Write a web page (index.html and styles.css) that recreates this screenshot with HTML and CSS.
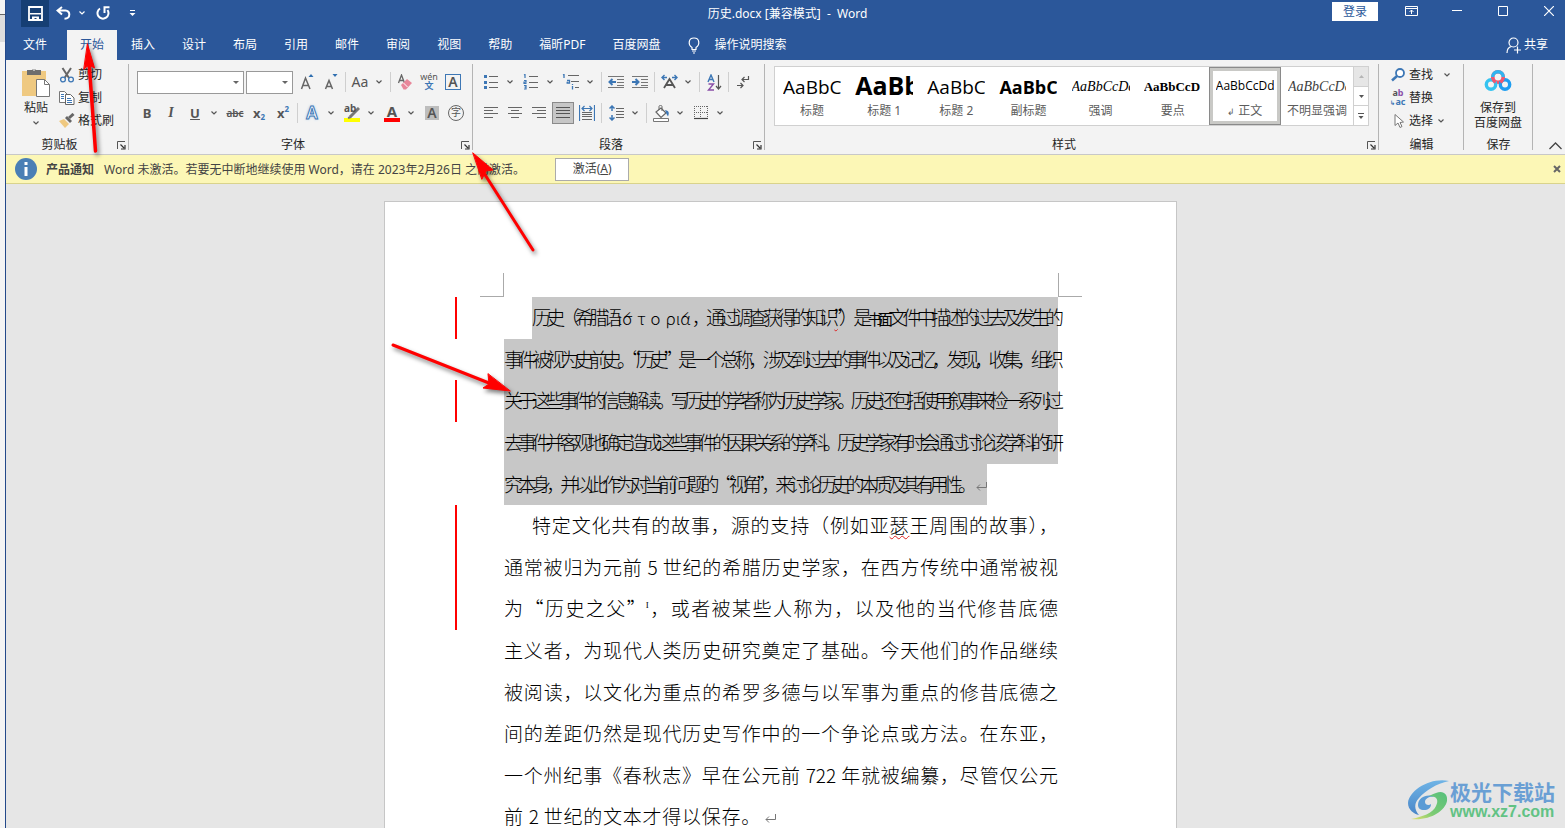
FILE: index.html
```html
<!DOCTYPE html>
<html lang="zh-CN">
<head>
<meta charset="utf-8">
<title>历史.docx - Word</title>
<link rel="stylesheet" href="styles.css">
</head>
<body>
<svg class="sprite" aria-hidden="true">
  <symbol id="chev" viewBox="0 0 6 4"><path d="M.5 .5 3 3 5.500 .5" fill="none" stroke="currentColor" stroke-width="1.2"/></symbol>
  <symbol id="launch" viewBox="0 0 9 9"><path d="M.5 8V.5H8" fill="none" stroke="#555"/><path d="M3.500 3.500 7 7M8 4v4H4" fill="none" stroke="#333" stroke-width="1.200"/></symbol>
</svg>
<div class="app">
  <div class="edge"></div>
  <main class="window">
    <header class="titlebar">
      <div class="quick">
        <button class="save" aria-label="保存"><svg width="15" height="15" viewBox="0 0 15 15"><path d="M1 1h13v13H1z" fill="none" stroke="#fff" stroke-width="1.800"/><path d="M2 7h11v1.500H2zM4 10.500h7V14H8.500v-2H6.500v2H4z" fill="#fff"/></svg></button>
        <button class="undo" aria-label="撤消"><svg width="16" height="14" viewBox="0 0 16 14"><path d="M6 1 1.500 4.500 6 8.500M2 4.500h7.500c5 0 5.500 8-1 8.300" fill="none" stroke="#fff" stroke-width="2"/></svg></button>
        <button class="tiny" aria-label="撤消列表"><svg class="chev"><use href="#chev"/></svg></button>
        <button class="redo" aria-label="重复"><svg width="15" height="14" viewBox="0 0 15 14"><path d="M4 2.500A5.500 5.500 0 1 0 11.500 4" fill="none" stroke="#fff" stroke-width="2"/><path d="M8.500 7V1.200H13.500" fill="none" stroke="#fff" stroke-width="2"/></svg></button>
        <button class="custom" aria-label="自定义快速访问工具栏"><svg width="7" height="7" viewBox="0 0 7 7"><path d="M1 .5h5" stroke="#fff"/><path d="M.5 3h6l-3 3z" fill="#fff"/></svg></button>
      </div>
      <h1 class="title">历史.docx [兼容模式]&nbsp; -&nbsp; Word</h1>
      <div class="syscmds">
        <button class="login">登录</button>
        <button class="sys" aria-label="功能区显示选项"><svg width="13" height="10" viewBox="0 0 13 10"><path d="M.5.5h12v9H.5zM.5 2.500h12M6.500 8V4M4.500 6l2-2 2 2" fill="none" stroke="#fff"/></svg></button>
        <button class="sys" aria-label="最小化"><svg width="10" height="10" viewBox="0 0 10 10"><path d="M0 4.500h10" stroke="#fff"/></svg></button>
        <button class="sys" aria-label="最大化"><svg width="10" height="10" viewBox="0 0 10 10"><path d="M.5.5h9v9h-9z" fill="none" stroke="#fff"/></svg></button>
        <button class="sys last" aria-label="关闭"><svg width="10" height="10" viewBox="0 0 10 10"><path d="m0 0 10 10M10 0 0 10" stroke="#fff" stroke-width="1.200"/></svg></button>
      </div>
    </header>
    <nav class="tabs">
      <button class="tab file">文件</button>
      <button class="tab active">开始</button>
      <button class="tab">插入</button>
      <button class="tab">设计</button>
      <button class="tab">布局</button>
      <button class="tab">引用</button>
      <button class="tab">邮件</button>
      <button class="tab">审阅</button>
      <button class="tab">视图</button>
      <button class="tab">帮助</button>
      <button class="tab">福昕PDF</button>
      <button class="tab">百度网盘</button>
      <button class="tell"><svg width="12" height="17" viewBox="0 0 12 17"><path d="M4 12.500v-2C0 8 0 1 6 1s6 7 2 9.500v2zM4 14h4M5 16h2" fill="none" stroke="#fff" stroke-width="1.200"/></svg>操作说明搜索</button>
      <button class="share"><svg width="16" height="17" viewBox="0 0 16 17"><circle cx="7.500" cy="5.500" r="4.500" fill="none" stroke="#fff" stroke-width="1.200"/><path d="M1 16c0-4 2-6 4.500-6.500M8 13h7M11.500 9.500v7" fill="none" stroke="#fff" stroke-width="1.200"/></svg>共享</button>
    </nav>

    <section class="ribbon">
      <div class="group clipboard">
        <div class="body clip">
          <button class="paste"><svg width="30" height="32" viewBox="0 0 30 32"><path d="M1 4h24v25H1z" fill="#efc981"/><path d="M6 8V3h5a2.500 2.500 0 0 1 4 0h5v5z" fill="#6d6d6d"/><path d="M12 3h2" stroke="#fff"/><path d="M15.500 12.500h8l5 5v12h-13z" fill="#fff" stroke="#777"/><path d="M23.500 12.500v5h5" fill="none" stroke="#777"/></svg><span>粘贴</span><svg class="chev"><use href="#chev"/></svg></button>
          <div class="stack">
            <button class="cmd"><svg width="16" height="16" viewBox="0 0 16 16"><path d="m3.500 1 6.500 10M12 1 5.500 11" stroke="#666" stroke-width="2"/><circle cx="4" cy="12.500" r="2.400" fill="none" stroke="#3d77b5" stroke-width="1.300"/><circle cx="12" cy="12.500" r="2.400" fill="none" stroke="#3d77b5" stroke-width="1.300"/></svg>剪切</button>
            <button class="cmd"><svg width="16" height="16" viewBox="0 0 16 16"><path d="M7 12.500H.5v-11h5l3 3V5" fill="#fff" stroke="#777"/><path d="M6.500 4.500h5l3.500 3.500v6.500H6.500z" fill="#fff" stroke="#666"/><path d="M2 4.500h3M2 6.500h3M2 8.500h3M8 8.500h4M8 10.500h5M8 12.500h5" stroke="#3d77b5"/></svg>复制</button>
            <button class="cmd"><svg width="16" height="16" viewBox="0 0 16 16"><path d="m0 8 5-2 5 5-4 4z" fill="#efc981"/><path d="m6 5 2-2 5 5-2 2z" fill="#666"/><path d="m10 5 4.500-4" stroke="#666" stroke-width="3"/></svg>格式刷</button>
          </div>
        </div>
        <div class="foot"><span>剪贴板</span><button class="launcher" aria-label="剪贴板设置"><svg width="9" height="9"><use href="#launch"/></svg></button></div>
      </div>

      <div class="group font">
        <div class="body rows">
          <div class="row combos">
            <span class="combo name"><select aria-label="字体"><option></option></select></span>
            <span class="combo size"><select aria-label="字号"><option></option></select></span>
            <button class="ic" aria-label="增大字号"><svg width="16" height="18" viewBox="0 0 16 18"><path d="m2.500 16 4-11 4.500 11M4 12.500h5.500" fill="none" stroke="#666" stroke-width="1.500"/><path d="m9.500 4 2.500-3 2.500 3z" fill="#2f6fb0"/></svg></button>
            <button class="ic" aria-label="减小字号"><svg width="16" height="18" viewBox="0 0 16 18"><path d="m2.500 16 3.500-8.500L9.500 16M4 13.500h4.500" fill="none" stroke="#666" stroke-width="1.500"/><path d="m9.500 1 2.500 3 2.500-3z" fill="#2f6fb0"/></svg></button>
            <i class="sep"></i>
            <button class="split aa" aria-label="更改大小写"><span>Aa</span><svg class="chev"><use href="#chev"/></svg></button>
            <i class="sep"></i>
            <button class="ic" aria-label="清除格式"><svg width="16" height="17" viewBox="0 0 16 17"><path d="m1.500 9 3-8 3 8M2.500 6.500h4" fill="none" stroke="#666" stroke-width="1.300"/><path d="m4 11 6-6 5 4-6 6.500H6.500z" fill="#e8879a"/><path d="m6.500 9 4 4" stroke="#fff"/></svg></button>
            <button class="ic pinyin" aria-label="拼音指南"><span>wén</span><b>文</b></button>
            <button class="ic" aria-label="字符边框"><span class="boxed">A</span></button>
          </div>
          <div class="row">
            <button class="ic bold">B</button>
            <button class="ic ital">I</button>
            <button class="split" aria-label="下划线"><span class="und">U</span><svg class="chev"><use href="#chev"/></svg></button>
            <button class="ic strike">abc</button>
            <button class="ic script">x<sub>2</sub></button>
            <button class="ic script">x<sup>2</sup></button>
            <i class="sep"></i>
            <button class="split" aria-label="文本效果"><span class="glow">A</span><svg class="chev"><use href="#chev"/></svg></button>
            <button class="split" aria-label="突出显示"><span class="mark"><em>ab</em><svg width="16" height="12" viewBox="0 0 16 12"><path d="m6 10 9-9" stroke="#777" stroke-width="3"/><path d="m4 11 3-1" stroke="#777" stroke-width="2"/></svg></span><svg class="chev"><use href="#chev"/></svg></button>
            <button class="split" aria-label="字体颜色"><span class="color">A</span><svg class="chev"><use href="#chev"/></svg></button>
            <button class="ic" aria-label="字符底纹"><span class="shade">A</span></button>
            <button class="ic" aria-label="带圈字符"><span class="ring">字</span></button>
          </div>
        </div>
        <div class="foot"><span>字体</span><button class="launcher" aria-label="字体设置"><svg width="9" height="9"><use href="#launch"/></svg></button></div>
      </div>

      <div class="group para">
        <div class="body rows">
          <div class="row">
            <button class="split" aria-label="项目符号"><svg width="16" height="16" viewBox="0 0 16 16"><path d="M6 2.500h9M6 8.500h9M6 13.500h9" stroke="#666"/><path d="M1 1h3v3H1zM1 7h3v3H1zM1 12h3v3H1z" fill="#3d77b5"/></svg><svg class="chev"><use href="#chev"/></svg></button>
            <button class="split" aria-label="编号"><svg width="16" height="16" viewBox="0 0 16 16"><path d="M6 2.500h9M6 8.500h9M6 13.500h9" stroke="#666"/><path d="m1 1 1-.5V4M1 6.500h2v1.700H1v1.300h2.500M1 11.500h2v3.500H1M1.500 13.200H3" fill="none" stroke="#3d77b5" stroke-width="1.200"/></svg><svg class="chev"><use href="#chev"/></svg></button>
            <button class="split" aria-label="多级列表"><svg width="18" height="16" viewBox="0 0 18 16"><path d="M6 1.500h11M9 7.500h8M13 13.500h4" stroke="#666"/><path d="m1 1 1-.5V4M5 6.500h2.500V9H5.200V7.800M10.500 10v1M10.500 12v3.500" fill="none" stroke="#3d77b5" stroke-width="1.300"/></svg><svg class="chev"><use href="#chev"/></svg></button>
            <i class="sep"></i>
            <button class="ic" aria-label="减少缩进量"><svg width="16" height="14" viewBox="0 0 16 14"><path d="M0 1.500h16M9 4.500h7M9 7.500h7M9 10.500h7M0 12.500h16" stroke="#777"/><path d="M8 7H2M4.500 4 1.500 7l3 3" fill="none" stroke="#3d77b5" stroke-width="2"/></svg></button>
            <button class="ic" aria-label="增加缩进量"><svg width="16" height="14" viewBox="0 0 16 14"><path d="M0 1.500h16M9 4.500h7M9 7.500h7M9 10.500h7M0 12.500h16" stroke="#777"/><path d="M0 7h6M3.500 4l3 3-3 3" fill="none" stroke="#3d77b5" stroke-width="2"/></svg></button>
            <i class="sep"></i>
            <button class="split" aria-label="中文版式"><svg width="17" height="16" viewBox="0 0 17 16"><path d="m3 14 5.500-9L14 14M5 11h7" fill="none" stroke="#555" stroke-width="1.800"/><path d="M1 3.500h5M3.500 1 1 3.500 3.500 6M16 3.500h-5M13.500 1 16 3.500 13.500 6" fill="none" stroke="#3d77b5" stroke-width="1.400"/></svg><svg class="chev"><use href="#chev"/></svg></button>
            <i class="sep"></i>
            <button class="ic" aria-label="排序"><svg width="15" height="17" viewBox="0 0 15 17"><path d="m1 8 3-7 3 7M2 5.500h4" fill="none" stroke="#3d77b5" stroke-width="1.400"/><path d="M1.500 10h5l-5 6H7" fill="none" stroke="#8a4fa8" stroke-width="1.400"/><path d="M11.500 1v14M9 12l2.500 3 2.500-3" fill="none" stroke="#555" stroke-width="1.200"/></svg></button>
            <i class="sep"></i>
            <button class="ic" aria-label="显示编辑标记"><svg width="13" height="14" viewBox="0 0 13 14"><path d="M11.500 1v3.500H5M7.500 2 5 4.500 7.500 7M0 10.500h6M3.500 8 6 10.500 3.500 13" fill="none" stroke="#555" stroke-width="1.200"/></svg></button>
          </div>
          <div class="row">
            <button class="ic" aria-label="左对齐"><svg width="14" height="12" viewBox="0 0 14 12"><path d="M0 .5h14M0 3.500h9M0 6.500h14M0 10.500h9" stroke="#666"/></svg></button>
            <button class="ic" aria-label="居中"><svg width="14" height="12" viewBox="0 0 14 12"><path d="M0 .5h14M3 3.500h8M0 6.500h14M3 10.500h8" stroke="#666"/></svg></button>
            <button class="ic" aria-label="右对齐"><svg width="14" height="12" viewBox="0 0 14 12"><path d="M0 .5h14M5 3.500h9M0 6.500h14M5 10.500h9" stroke="#666"/></svg></button>
            <button class="ic pressed" aria-label="两端对齐"><svg width="14" height="12" viewBox="0 0 14 12"><path d="M0 .5h14M0 3.500h14M0 6.500h14M0 10.500h14" stroke="#555"/></svg></button>
            <button class="ic" aria-label="分散对齐"><svg width="16" height="16" viewBox="0 0 16 16"><path d="M.5 0v16M15.500 0v16M3 3.500h10M5.500 1 3 3.500 5.500 6M10.500 1 13 3.500 10.500 6" fill="none" stroke="#3d77b5" stroke-width="1.200"/><path d="M3 7.500h10M3 9.500h10M3 11.500h10M3 14.500h10" stroke="#666"/></svg></button>
            <i class="sep"></i>
            <button class="split" aria-label="行和段落间距"><svg width="15" height="16" viewBox="0 0 15 16"><path d="M7 3.500h8M7 6.500h8M7 9.500h8M7 12.500h8" stroke="#666"/><path d="M3 1v5M3 10v5M.5 3.500 3 1l2.500 2.500M.5 12.500 3 15l2.500-2.500" fill="none" stroke="#3d77b5" stroke-width="1.500"/></svg><svg class="chev"><use href="#chev"/></svg></button>
            <i class="sep"></i>
            <button class="split" aria-label="底纹"><svg width="17" height="17" viewBox="0 0 17 17"><path d="m3 7 5-4 5 5-5 4.500z" fill="#fff" stroke="#666" stroke-width="1.200"/><path d="M6 5V1.500C6 0 9 0 9 1.500V6" fill="none" stroke="#666"/><path d="M12 5c5 1 4 4 3 6.500-1-2-2-3-2-4z" fill="#3d77b5"/><path d="M.5 13.500h15v3H.5z" fill="#fff" stroke="#777"/></svg><svg class="chev"><use href="#chev"/></svg></button>
            <button class="split" aria-label="边框"><svg width="14" height="14" viewBox="0 0 14 14"><path d="M0 .5h14M0 6.500h14M.5 0v12M6.500 0v12M13.500 0v12" stroke="#666" stroke-dasharray="1 1"/><path d="M0 12.500h14" stroke="#444" stroke-width="1.200"/></svg><svg class="chev"><use href="#chev"/></svg></button>
          </div>
        </div>
        <div class="foot"><span>段落</span><button class="launcher" aria-label="段落设置"><svg width="9" height="9"><use href="#launch"/></svg></button></div>
      </div>

      <div class="group styles">
        <div class="body">
          <div class="gallery">
            <button class="tile"><span class="sample s-title">AaBbC</span><span>标题</span></button>
            <button class="tile"><span class="sample s-h1">AaBb</span><span>标题 1</span></button>
            <button class="tile"><span class="sample s-title">AaBbC</span><span>标题 2</span></button>
            <button class="tile"><span class="sample s-sub">AaBbCc</span><span>副标题</span></button>
            <button class="tile"><span class="sample s-em">AaBbCcDd</span><span>强调</span></button>
            <button class="tile"><span class="sample s-strong">AaBbCcD</span><span>要点</span></button>
            <button class="tile on"><span class="sample s-body">AaBbCcDd</span><span><small>↲</small> 正文</span></button>
            <button class="tile"><span class="sample s-em soft">AaBbCcDd</span><span>不明显强调</span></button>
            <div class="scroll">
              <button class="off" aria-label="上一行"><svg width="5" height="3" viewBox="0 0 5 3"><path d="M0 3h5L2.500 0z" fill="#b5b5b5"/></svg></button>
              <button aria-label="下一行"><svg width="5" height="3" viewBox="0 0 5 3"><path d="M0 0h5L2.500 3z" fill="#555"/></svg></button>
              <button aria-label="其他样式"><svg width="6" height="6" viewBox="0 0 6 6"><path d="M0 .5h6" stroke="#555"/><path d="M.5 3h5L3 6z" fill="#555"/></svg></button>
            </div>
          </div>
        </div>
        <div class="foot"><span>样式</span><button class="launcher" aria-label="样式设置"><svg width="9" height="9"><use href="#launch"/></svg></button></div>
      </div>

      <div class="group edit">
        <div class="body stack">
          <button class="cmd"><svg width="16" height="16" viewBox="0 0 16 16"><circle cx="10" cy="6" r="4" fill="#fff" stroke="#3d77b5" stroke-width="1.800"/><path d="m7 9-5 4.500" stroke="#3d77b5" stroke-width="2.500"/></svg>查找<svg class="chev far"><use href="#chev"/></svg></button>
          <button class="cmd"><span class="swap"><b>a<i>b</i></b><b><u>↳</u>ac</b></span>替换</button>
          <button class="cmd"><svg width="16" height="16" viewBox="0 0 16 16"><path d="M5 1.500v11l3-2.500 2 4.500 2-1-2-4 3.500-.5z" fill="#fff" stroke="#777"/></svg>选择<svg class="chev"><use href="#chev"/></svg></button>
        </div>
        <div class="foot"><span>编辑</span></div>
      </div>

      <div class="group cloud">
        <div class="body"><button class="pan"><svg width="28" height="24" viewBox="0 0 28 24"><circle cx="14" cy="8" r="5.300" fill="none" stroke="#f4566e" stroke-width="3.400"/><circle cx="7" cy="15.500" r="4.700" fill="none" stroke="#35c3f0" stroke-width="3.400"/><circle cx="21" cy="15.500" r="4.700" fill="none" stroke="#1e9df0" stroke-width="3.400"/><path d="M8.700 8a5.300 5.300 0 0 1 10.600 0" fill="none" stroke="#2fb4f0" stroke-width="3.400"/><path d="M8.700 8c0 2 1.500 4.500 3 5M19.300 8c0 2-1.500 4.500-3 5" fill="none" stroke="#f4566e" stroke-width="3.200"/></svg><span>保存到<br>百度网盘</span></button></div>
        <div class="foot"><span>保存</span></div>
      </div>
      <button class="collapse" aria-label="折叠功能区"><svg width="13" height="8" viewBox="0 0 13 8"><path d="m.5 7 6-6 6 6" fill="none" stroke="#444" stroke-width="1.300"/></svg></button>
    </section>

    <div class="notice">
      <svg width="22" height="22" viewBox="0 0 22 22"><circle cx="11" cy="11" r="11" fill="#4a7fb5"/><path d="M9.500 9h3v9h-3zM9.500 4h3v3h-3z" fill="#fff"/></svg>
      <strong>产品通知</strong>
      <span>Word 未激活。若要无中断地继续使用 Word，请在 2023年2月26日 之前激活。</span>
      <button class="activate">激活(<u>A</u>)</button>
      <button class="dismiss" aria-label="关闭通知"><svg width="8" height="8" viewBox="0 0 8 8"><path d="m1 1 6 6M7 1 1 7" stroke="#666" stroke-width="2"/></svg></button>
    </div>

    <section class="canvas">
      <article class="page">
        <div class="corners"><i></i><i></i></div>
        <p class="text selected">
          <span class="line first changed">历史（希腊语<span class="greek">ίσ τ ο ρία</span>，通过调查获得的知识<span class="typo">”</span>）是<span class="dense">书面</span>文件中描述的过去及发生的</span>
          <span class="line">事件被视为史前史。“历史”是一个总称，涉及到过去的事件以及记忆，发现，收集，组织</span>
          <span class="line changed">关于这些事件的信息解读。写历史的学者称为历史学家。历史还包括使用叙事来检一系列过</span>
          <span class="line">去事件并客观地确定造成这些事件的因果关系的学科。历史学家有时会通过讨论该学科的研</span>
          <span class="line end">究本身，并以此作为对当前问题的“视角”，来讨论历史的本质及其有用性。<svg class="ret" width="11" height="10" viewBox="0 0 11 10"><path d="M10.500 0v5.500H1M4 2.500 1 5.500l3 3" fill="none" stroke="#777"/></svg></span>
        </p>
        <p class="text">
          <span class="line first changed">特定文化共有的故事，源的支持（例如亚<span class="typo">瑟</span>王周围的故事），</span>
          <span class="line changed">通常被归为元前 5 世纪的希腊历史学家，在西方传统中通常被视</span>
          <span class="line changed">为“历史之父”<sup>I</sup>，或者被某些人称为，以及他的当代修昔底德</span>
          <span class="line">主义者，为现代人类历史研究奠定了基础。今天他们的作品继续</span>
          <span class="line">被阅读，以文化为重点的希罗多德与以军事为重点的修昔底德之</span>
          <span class="line">间的差距仍然是现代历史写作中的一个争论点或方法。在东亚，</span>
          <span class="line">一个州纪事《春秋志》早在公元前 722 年就被编纂，尽管仅公元</span>
          <span class="line short">前 2 世纪的文本才得以保存。<svg class="ret" width="11" height="10" viewBox="0 0 11 10"><path d="M10.500 0v5.500H1M4 2.500 1 5.500l3 3" fill="none" stroke="#777"/></svg></span>
        </p>
      </article>
      <div class="watermark">
        <svg width="44" height="44" viewBox="0 0 44 44"><defs><linearGradient id="sw" x1="0" y1="0" x2="0" y2="1"><stop offset="0" stop-color="#6fb4e6"/><stop offset="1" stop-color="#4a86c8"/></linearGradient><linearGradient id="sg" x1="1" y1="0" x2="0" y2="1"><stop offset="0" stop-color="#55bf7c"/><stop offset=".6" stop-color="#7ccb74"/><stop offset="1" stop-color="#e6e06a"/></linearGradient></defs><path d="M43 3C25-1 3 12 2 25c0 7 6 11 11 12-5-6-5-12 0-17C20 12 30 6 43 3z" fill="url(#sw)"/><path d="M12 27c0-8 10-12 17-8-5-1-10 1-10 5 0 3 4 4 6 2 0 4-3 6-7 6s-6-2-6-5z" fill="#5b9bd5"/><path d="M30 15c7-3 12 1 11 8-2 10-17 20-36 18 11-2 22-6 25-13 3-6 1-10-7-10 2-1 4-2 7-3z" fill="url(#sg)"/></svg>
        <div class="brand"><b>极光下载站</b><span>www.xz7.com</span></div>
      </div>
    </section>
  </main>
  <svg class="arrows" width="600" height="420" viewBox="0 0 600 420" aria-hidden="true">
    <g fill="#f00" stroke="#f00" stroke-linecap="round"><path d="M95.500 151 89 62" stroke-width="3.500"/><path d="m87.500 44 7 24-5.500-3-5 4z" stroke-width="1"/>
    <path d="M533 250 482 170" stroke-width="3"/><path d="m473 153 20 17-7 1-4 8z" stroke-width="1"/>
    <path d="M393 345 494 385" stroke-width="3"/><path d="m510 391-27 -3 6-4-1-10z" stroke-width="1"/></g>
  </svg>
</div>
</body>
</html>
```
FILE: styles.css
```css
* { box-sizing: border-box; }
body {
  margin: 0;
  font: 12px/16px "Noto Sans", "Noto Sans CJK SC", sans-serif;
  color: #262626;
}
button {
  border: 0;
  padding: 0;
  background: none;
  font: inherit;
  color: inherit;
  white-space: nowrap;
}
.sprite { position: absolute; width: 0; height: 0; }
.app { display: flex; height: 100vh; position: relative; overflow: hidden; }
.edge {
  flex: 0 0 6px;
  border-right: 1px solid #24498a;
  background: linear-gradient(#f4f4f4 14px, #666 14px 15px, #ddd 15px 42px, #f4f4f4 42px);
}
.window { flex: 1; min-width: 0; display: flex; flex-direction: column; }
.chev { width: 6px; height: 4px; flex: none; color: #555; }

/* title bar */
.titlebar {
  display: grid;
  grid-template-columns: 1fr auto 1fr;
  height: 30px;
  flex: none;
  background: #2b579a;
  color: #fff;
}
.titlebar .chev { color: #fff; }
.quick { display: flex; align-items: flex-start; padding-left: 15px; }
.quick button { display: flex; align-items: center; justify-content: center; height: 26px; }
.quick .save { width: 28px; height: 27px; background: #163f74; }
.undo { width: 30px; }
.tiny { width: 6px; }
.redo { width: 36px; }
.quick .custom { width: 22px; }
.title { margin: 0; padding-left: 4px; font-size: 12px; font-weight: 400; line-height: 28px; }
.syscmds { display: flex; justify-content: flex-end; align-items: flex-start; }
.login { width: 46px; height: 19px; margin: 2px 10px 0 0; background: #fff; color: #2b579a; }
.sys { width: 46px; height: 22px; display: flex; align-items: center; justify-content: center; }
.sys.last { width: 46px; margin-right: -7px; }

/* ribbon tabs */
.tabs { display: flex; gap: 1px; height: 30px; flex: none; background: #2b579a; color: #fff; }
.tab { padding: 0 13px; }
.tab.file { padding: 0 19px 0 17px; }
.tab.active { background: #f3f3f3; color: #2b579a; }
.tell { display: flex; align-items: center; gap: 14px; padding-left: 14px; }
.share { display: flex; align-items: center; gap: 2px; margin-left: auto; padding-right: 17px; }

/* ribbon */
.ribbon {
  display: flex;
  flex: none;
  height: 95px;
  background: #f3f3f3;
  border-bottom: 1px solid #c8c8c8;
}
.group { display: flex; flex-direction: column; position: relative; flex: none; }
.group::after {
  content: "";
  position: absolute;
  right: 0;
  top: 4px;
  bottom: 4px;
  width: 1px;
  background: #b4b4b4;
}
.clipboard { width: 123px; }
.font { width: 344px; }
.para { width: 292px; }
.styles { flex: 1 1 auto; min-width: 0; }
.edit { width: 85px; }
.cloud { width: 69px; }
.body { height: 74px; flex: none; }
.foot { display: flex; align-items: center; height: 20px; padding-top: 1px; text-align: center; }
.foot span { flex: 1; }
.launcher { width: 16px; height: 16px; display: flex; align-items: center; padding: 2px 0 0 4px; }
.clip { display: flex; padding-left: 15px; }
.paste { display: flex; flex-direction: column; align-items: center; width: 30px; padding-top: 7px; }
.paste span { line-height: 18px; }
.paste .chev { margin-top: 4px; }
.stack { display: flex; flex-direction: column; padding-top: 3px; }
.cmd { display: flex; align-items: center; gap: 3px; height: 23px; }
.clip .stack { padding-left: 8px; }
.rows { display: flex; flex-direction: column; padding: 9px 0 0 6px; gap: 5px; }
.row { display: flex; align-items: center; height: 26px; }
.ic { width: 24px; height: 24px; display: flex; align-items: center; justify-content: center; color: #555; }
.split { width: 40px; height: 24px; display: grid; grid-template-columns: 24px 14px; place-items: center; color: #555; }
.sep { width: 1px; height: 20px; margin: 0 2px; background: #cfcfcf; }
.combos { padding-left: 2px; }
.combo { position: relative; height: 23px; margin-right: 2px; }
.combo.name { width: 107px; }
.combo.size { width: 47px; }
.combo select { appearance: none; width: 100%; height: 100%; display: block; border: 1px solid #999; border-radius: 0; background: #fff; font: inherit; }
.combo::after {
  content: "";
  position: absolute;
  right: 5px;
  top: 10px;
  border: 3px solid transparent;
  border-top-color: #666;
  border-bottom: 0;
  pointer-events: none;
}
.aa { font-size: 14px; }
.pinyin { flex-direction: column; font-size: 9px; line-height: 8px; }
.pinyin b { color: #3d77b5; font-size: 9px; line-height: 10px; }
.boxed { width: 16px; height: 16px; border: 1px solid #3d77b5; font-weight: 600; font-size: 14px; line-height: 14px; }
.bold { font-weight: 700; font-size: 13px; }
.ital { font: italic 700 14px "Liberation Serif", serif; }
.und { font-weight: 700; font-size: 13px; text-decoration: underline; }
.strike { font-size: 10px; font-weight: 600; text-decoration: line-through; }
.script { font-weight: 700; font-size: 13px; }
.script sub, .script sup { font-size: 8px; line-height: 8px; color: #3d77b5; }
.script sub { padding-top: 8px; }
.script sup { padding-bottom: 8px; }
.glow { font-size: 17px; line-height: 18px; font-weight: 600; color: #fff; -webkit-text-stroke: 1px #3d77b5; text-shadow: 0 0 3px #7fb0e0; }
.mark { position: relative; width: 16px; height: 17px; border-bottom: 4px solid #ff0; }
.mark em { position: absolute; left: 0; top: -2px; font: 700 10px/10px "Noto Sans", sans-serif; }
.mark svg { display: block; margin-top: 2px; }
.color { width: 16px; height: 17px; border-bottom: 4px solid #f00; font-size: 15px; line-height: 12px; font-weight: 700; }
.shade { width: 14px; height: 14px; background: #bdbdbd; font-size: 14px; line-height: 14px; font-weight: 600; }
.ring { width: 16px; height: 16px; border: 1px solid #666; border-radius: 50%; font-size: 10px; line-height: 13px; }
.pressed { width: 22px; height: 22px; margin: 0 1px; background: #c6c6c6; border: 1px solid #8a8a8a; }

/* style gallery */
.styles .body { padding: 6px 10px 0 9px; }
.gallery { display: flex; height: 60px; border: 1px solid #d0d0d0; background: #fff; padding-left: 1px; }
.tile { flex: 1 1 72px; min-width: 0; display: flex; flex-direction: column; align-items: center; padding-top: 6px; color: #5c5c5c; overflow: hidden; }
.sample { width: 58px; height: 30px; overflow: hidden; text-align: left; line-height: 28px; color: #000; }
.s-title { font-family: "Open Sans", sans-serif; font-size: 19px; }
.s-h1 { font-family: "Open Sans", sans-serif; font-size: 25px; font-weight: 700; line-height: 24px; }
.s-sub { font-family: "Open Sans", sans-serif; font-size: 18px; font-weight: 700; }
.s-em { font: italic 14px/28px "Liberation Serif", serif; }
.s-strong { font: 700 13px/28px "Liberation Serif", serif; }
.s-body { font-family: "Open Sans", sans-serif; font-size: 12px; line-height: 26px; }
.soft { color: #404040; }
.tile small { font-size: 9px; }
.tile.on { border: 1px solid #8a8a8a; box-shadow: inset 0 0 0 3px #c9c9c6; padding-top: 5px; }
.scroll { flex: 0 0 15px; display: flex; flex-direction: column; border-left: 1px solid #d0d0d0; }
.scroll button { flex: 1; display: flex; align-items: center; justify-content: center; border-top: 1px solid #d0d0d0; }
.scroll .off { background: #e6e6e6; border-top: 0; }

.edit .stack { padding-left: 11px; }
.edit .cmd .chev { margin-left: 2px; }
.edit .cmd .far { margin-left: 8px; }
.swap { width: 16px; display: flex; flex-direction: column; font-size: 9px; line-height: 9px; color: #555; }
.swap i { font-style: normal; color: #8a4fa8; }
.swap b + b { color: #3d77b5; }
.swap u { font-size: 6px; text-decoration: none; }
.pan { width: 68px; display: flex; flex-direction: column; align-items: center; padding-top: 9px; line-height: 15px; }
.pan span { margin-top: 7px; }
.collapse { align-self: flex-end; width: 32px; height: 16px; text-align: right; padding-right: 3px; }

/* message bar */
.notice {
  display: flex;
  align-items: center;
  flex: none;
  height: 29px;
  padding: 0 4px 0 9px;
  background: #fcf7b6;
  border-bottom: 1px solid #d9d38c;
  color: #444;
}
.notice strong { margin: 0 10px 0 9px; }
.notice strong, .notice span { line-height: 20px; padding-top: 1px; }
.activate { width: 74px; height: 23px; margin-left: 30px; background: #fff; border: 1px solid #ababab; }
.dismiss { margin-left: auto; width: 8px; display: flex; }

/* document */
.canvas {
  position: relative;
  flex: 1;
  min-height: 0;
  display: flex;
  align-items: flex-start;
  justify-content: center;
  padding: 17px 10px 0 0;
  overflow: hidden;
  background: #e6e6e6;
}
.page {
  width: 793px;
  flex: none;
  padding: 71px 118px 96px 119px;
  background: #fff;
  border: 1px solid #c6c6c6;
}
.corners { display: flex; justify-content: space-between; margin: 0 -24px; }
.corners i { width: 24px; height: 24px; border: solid #aaa; border-width: 0 1px 1px 0; }
.corners i + i { border-width: 0 0 1px 1px; }
.text {
  display: grid;
  grid-auto-rows: 42px 41px 42px 42px 41px;
  margin: 0;
  font: 300 19px/40px "Noto Sans CJK SC", sans-serif;
  color: #000;
}
.line { position: relative; white-space: nowrap; text-align: justify; text-align-last: justify; }
.first { margin-left: 28px; }
.changed::before {
  content: "";
  position: absolute;
  left: -49px;
  top: 0;
  width: 2px;
  height: 100%;
  background: #f00;
}
.first.changed::before { left: -77px; }
/* condensed character spacing of the selected paragraph */
.selected { letter-spacing: -6px; }
.selected .line { background: #c7c7c7; }
.greek { letter-spacing: 0; font-size: 17px; }
.end { width: 483px; }
.short { width: 272px; }
.dense { font-size: 15px; font-weight: 400; }
.typo { text-decoration: underline wavy #d22 1px; text-underline-offset: 2px; }
.text sup { font: 9px/9px "Liberation Serif", serif; vertical-align: 8px; }
.ret { margin-left: 4px; }

.watermark { position: absolute; right: 10px; bottom: 6px; display: flex; align-items: center; gap: 0; }
.brand { display: flex; flex-direction: column; }
.brand b { font: 700 21px/23px "Noto Sans CJK SC", sans-serif; color: #6a9fd4; }
.brand span { font: 700 16px/18px "Liberation Sans", sans-serif; color: #62c284; }

.arrows { position: absolute; left: 0; top: 0; pointer-events: none; filter: drop-shadow(2px 3px 2px rgba(0, 0, 0, .5)); }
```
